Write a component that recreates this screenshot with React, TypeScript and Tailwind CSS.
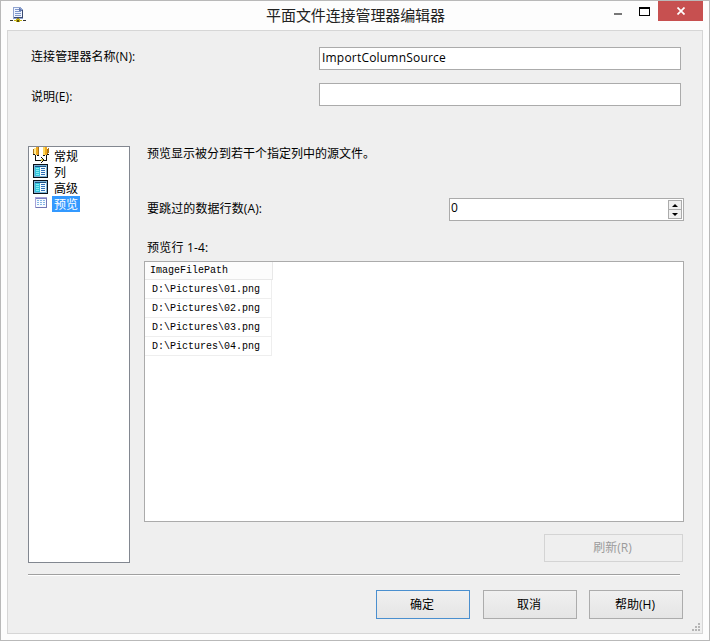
import { useState } from "react";
import type { ReactNode } from "react";

const rows = [
  "D:\\Pictures\\01.png",
  "D:\\Pictures\\02.png",
  "D:\\Pictures\\03.png",
  "D:\\Pictures\\04.png",
];

function ConnectionIcon() {
  return (
    <svg width="16" height="16" viewBox="0 0 16 16" shapeRendering="crispEdges">
      <path d="M3 0h7l3 3v9H3z" fill="#8fa3cf" />
      <path d="M4 1h5v3h3v6H4z" fill="#f0f5ff" />
      <path d="M9 1l3 3H9z" fill="#6478ac" />
      <path d="M5 2h4v1H5zM5 4h6v1H5zM5 6h6v1H5zM5 8h6v1H5z" fill="#7e97cb" />
      <path d="M12 3h1v8h-1zM4 10h9v1H4z" fill="#3a4a72" />
      <path d="M7 11h2v2H7z" fill="#8a8030" />
      <path d="M0 13h3v1H0zM13 13h3v1h-3z" fill="#333" />
      <path d="M4 13h8v1H4zM6 12h4v3H6z" fill="#c9b616" />
      <path d="M7 13h2v2H7z" fill="#5c5200" />
    </svg>
  );
}

function GeneralIcon() {
  return (
    <svg width="17" height="16" viewBox="0 0 17 16" shapeRendering="crispEdges">
      <path d="M0 2h1v5H0zM5 0h1v8H5z" fill="#a8741c" />
      <path d="M1 1h2v7H1z" fill="#ffe98f" />
      <path d="M3 0h2v8H3z" fill="#f0a820" />
      <path d="M10 0h2v8h-2z" fill="#ffd95c" />
      <path d="M12 0h2v8h-2z" fill="#f0a820" />
      <path d="M14 2h1v5h-1zM15 1h1v5h-1z" fill="#a8741c" />
      <path d="M2 8h1v5h5v1H2zM13 8h1v6H9v-1h4z" fill="#111" />
      <path d="M0 7h2v1H0zM4 8h2v1H4zM10 8h2v1h-2zM14 7h2v1h-2z" fill="#111" />
      <path d="M8 10h1v1H8zM9 11h1v1H9zM10 12h1v2h-1zM9 14h1v1H9zM8 15h1v1H8z" fill="#111" />
      <path d="M8 12h2v2H8z" fill="#d8c83a" />
    </svg>
  );
}

function ColumnsIcon() {
  return (
    <svg width="16" height="16" viewBox="0 0 16 16" shapeRendering="crispEdges">
      <path d="M0 1h15v14H0z" fill="#0b1018" />
      <path d="M1 2h13v12H1z" fill="#7db4d8" />
      <path d="M2 3h11v10H2z" fill="#35c4dc" />
      <path d="M2 3h11v1H2z" fill="#1c4f80" />
      <path d="M3 5h3v1H3zM3 7h3v1H3zM3 9h3v1H3zM3 11h3v1H3z" fill="#86edf5" />
      <path d="M7 4h6v9H7z" fill="#f2fcff" />
      <path d="M8 5h4v1H8zM8 7h4v1H8zM8 9h4v1H8zM8 11h4v1H8z" fill="#2f6fb8" />
    </svg>
  );
}

function PreviewIcon() {
  return (
    <svg width="16" height="16" viewBox="0 0 16 16" shapeRendering="crispEdges">
      <path d="M2 2h12v11H2z" fill="#a6a3d8" />
      <path d="M3 4h10v8H3z" fill="#f7fbff" />
      <path d="M3 3h10v1H3z" fill="#7b7fc4" />
      <path d="M13 3h1v10h-1zM3 12h11v1H3z" fill="#7276b4" />
      <path d="M4 5h2v1H4zM7 5h2v1H7zM10 5h2v1h-2zM4 7h2v1H4zM7 7h2v1H7zM10 7h2v1h-2zM4 9h2v1H4zM7 9h2v1H7zM10 9h2v1h-2z" fill="#85b6e4" />
    </svg>
  );
}

function DialogButton({ children, primary }: { children: ReactNode; primary?: boolean }) {
  return (
    <button
      className={
        primary
          ? "h-[29px] w-[94px] border border-[#4a8fcf] bg-linear-to-b from-[#f0f0f0] to-[#e5e5e5] pr-0.5 leading-[27px]"
          : "h-[29px] w-[94px] border border-[#acacac] bg-linear-to-b from-[#f0f0f0] to-[#e5e5e5] pr-0.5 leading-[27px]"
      }
    >
      {children}
    </button>
  );
}

const pages = [
  { name: "常规", icon: <GeneralIcon /> },
  { name: "列", icon: <ColumnsIcon /> },
  { name: "高级", icon: <ColumnsIcon /> },
  { name: "预览", icon: <PreviewIcon /> },
];

export default function App() {
  const [page, setPage] = useState("预览");
  const [name, setName] = useState("ImportColumnSource");
  const [description, setDescription] = useState("");
  const [skip, setSkip] = useState(0);

  return (
    <div className="flex h-[641px] w-[710px] flex-col border border-[#b9b9b9] bg-[#fdfdfd] px-1.5 pb-1.5 font-['Open_Sans','Noto_Sans_CJK_SC',sans-serif] text-[12px] leading-4 text-black">
      {/* Title bar */}
      <div className="-mr-1.5 flex h-[29px] shrink-0 items-start">
        <div className="w-[108px] shrink-0 pt-1.5 pl-[3px]">
          <ConnectionIcon />
        </div>
        <div className="flex-1 pr-px text-center text-[15px] leading-[28px] tracking-[-0.1px] text-[#222]">
          平面文件连接管理器编辑器
        </div>
        <div className="flex w-[112px] shrink-0 justify-end pr-1.5">
          <div className="flex w-[25px] justify-center pt-3">
            <div className="h-0.5 w-2 bg-[#777]" />
          </div>
          <div className="flex w-[28px] justify-end pt-1.5 pr-2">
            <div className="h-[9px] w-[11px] shrink-0 border border-t-2 border-black" />
          </div>
          <button className="flex h-5 w-[45px] items-center justify-center bg-[#c75050]">
            <svg width="8" height="8" viewBox="0 0 8 8">
              <path d="M0.5 0.5l7 7M7.5 0.5l-7 7" stroke="#fff" strokeWidth="1.7" />
            </svg>
          </button>
        </div>
      </div>

      <div className="flex min-h-0 flex-1 flex-col border border-[#d6d6d6] bg-[#efefef] pr-[18px] pl-5">
        {/* Name and description */}
        <div className="mt-4 flex h-[23px] items-center">
          <label className="w-[291px] pb-[3px] pl-[3px] tracking-[0.1px]">连接管理器名称(N):</label>
          <input
            value={name}
            onChange={(e) => setName(e.target.value)}
            className="h-[23px] w-[362px] border border-[#ababab] bg-white pb-0.5 pl-0.5 tracking-[0.2px] outline-none"
          />
        </div>
        <div className="mt-[13px] flex h-[23px] items-center">
          <label className="w-[291px] pt-1 pl-[3px] tracking-[0.1px]">说明(E):</label>
          <input
            value={description}
            onChange={(e) => setDescription(e.target.value)}
            className="h-[23px] w-[362px] border border-[#ababab] bg-white pb-0.5 pl-0.5 tracking-[0.2px] outline-none"
          />
        </div>

        <div className="mt-10 flex h-[417px] shrink-0">
          {/* Page list */}
          <div className="w-[102px] border border-[#828790] bg-white pl-1">
            {pages.map((p) => (
              <div key={p.name} className="flex h-4 cursor-default" onClick={() => setPage(p.name)}>
                <div className="w-[19px] shrink-0">{p.icon}</div>
                <span
                  className={
                    p.name === page
                      ? "mt-px h-4 bg-[#3399ff] px-0.5 leading-[17px] text-white"
                      : "mt-px px-0.5 leading-[18px]"
                  }
                >
                  {p.name}
                </span>
              </div>
            ))}
          </div>

          {/* Preview page */}
          <div className="ml-[14px] flex w-[540px] flex-col">
            <div className="h-[52px] pl-[3px]">预览显示被分到若干个指定列中的源文件。</div>
            <div className="flex h-[23px]">
              <div className="w-[305px] pt-[3px] pl-[3px] tracking-[0.1px]">要跳过的数据行数(A):</div>
              <div className="flex h-[23px] w-[235px] justify-between border border-[#ababab] bg-white pl-px">
                <span className="pt-px">{skip}</span>
                <div className="flex w-[15px] flex-col pt-px pr-px">
                  <button
                    onClick={() => setSkip(skip + 1)}
                    className="flex h-[10px] items-center justify-center border border-[#ababab] bg-[#f0f0f0]"
                  >
                    <svg width="6" height="3" viewBox="0 0 6 3">
                      <path d="M3 0L6 3H0z" />
                    </svg>
                  </button>
                  <button
                    onClick={() => setSkip(Math.max(0, skip - 1))}
                    className="flex h-[9px] items-center justify-center border border-t-0 border-[#ababab] bg-[#f0f0f0]"
                  >
                    <svg width="6" height="3" viewBox="0 0 6 3">
                      <path d="M3 3L6 0H0z" />
                    </svg>
                  </button>
                </div>
              </div>
            </div>
            <div className="h-10 pt-[19px] pl-[3px] tracking-[0.2px]">预览行 1-4:</div>
            <div className="h-[261px] border border-[#ababab] bg-white font-['Liberation_Mono',monospace] text-[10px]">
              <div className="h-[18px] w-32 border-r border-b border-[#e8e8e8] bg-[#fcfcfc] pl-[5px] leading-[18px]">
                ImageFilePath
              </div>
              {rows.map((row) => (
                <div key={row} className="h-[19px] w-[127px] border-r border-b border-[#eeeeee] pl-[7px] leading-[20px]">
                  {row}
                </div>
              ))}
            </div>
            <button
              disabled
              className="mt-3 mr-px h-7 w-[139px] shrink-0 self-end border border-[#d4d4d4] bg-[#efefef] pr-0.5 leading-[26px] text-[#9b9b9b]"
            >
              刷新(R)
            </button>
          </div>
        </div>

        <div className="mt-[11px] h-0.5 w-[652px] shrink-0 border-t border-b border-t-[#a0a0a0] border-b-white" />
        <div className="mt-[14px] flex justify-end pr-px">
          <div className="flex">
            <DialogButton primary>确定</DialogButton>
            <div className="ml-[13px]">
              <DialogButton>取消</DialogButton>
            </div>
            <div className="ml-3">
              <DialogButton>帮助(H)</DialogButton>
            </div>
          </div>
        </div>

        {/* Resize grip */}
        <div className="mt-1 -mr-[17px] self-end">
          <svg width="9" height="9" viewBox="0 0 9 9" className="fill-[#b5b5b5]" shapeRendering="crispEdges">
            <path d="M6 0h2v2H6zM3 3h2v2H3zM6 3h2v2H6zM0 6h2v2H0zM3 6h2v2H3zM6 6h2v2H6z" />
          </svg>
        </div>
      </div>
    </div>
  );
}
